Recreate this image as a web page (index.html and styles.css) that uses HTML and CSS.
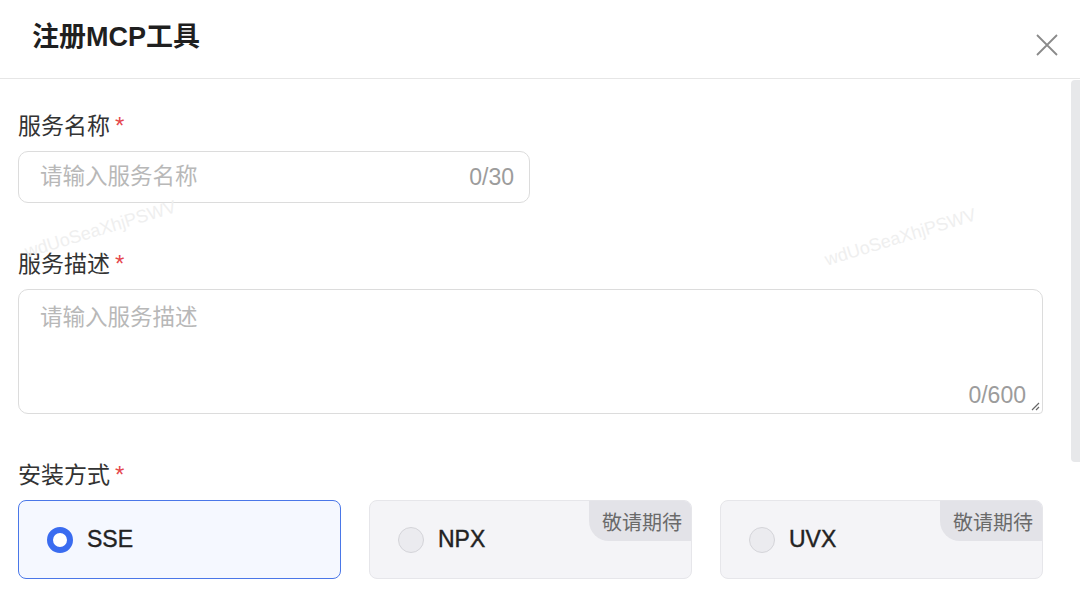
FILE: index.html
```html
<!DOCTYPE html>
<html lang="zh-CN">
<head>
<meta charset="utf-8">
<title>注册MCP工具</title>
<link rel="stylesheet" href="styles.css">
</head>
<body>
<div class="dialog">
  <div class="header">
    <h1 class="title">注册MCP工具</h1>
    <button class="close" aria-label="关闭">
      <svg width="22" height="22" viewBox="0 0 22 22"><path d="M1 1 L21 21 M21 1 L1 21" stroke="#8a8a8a" stroke-width="1.8" fill="none"/></svg>
    </button>
  </div>
  <div class="body">
    <div class="form-item item1">
      <div class="label">服务名称<span class="req">*</span></div>
      <div class="field field-input">
        <span class="placeholder">请输入服务名称</span>
        <span class="count">0/30</span>
      </div>
    </div>
    <div class="form-item item2">
      <div class="label">服务描述<span class="req">*</span></div>
      <div class="field field-area">
        <span class="placeholder">请输入服务描述</span>
        <span class="count count-area">0/600</span>
        <svg class="resize" width="10" height="10" viewBox="0 0 10 10"><path d="M9 2 L2 9 M9 6 L6 9" stroke="#666" stroke-width="1.2" fill="none"/></svg>
      </div>
    </div>
    <div class="form-item last">
      <div class="label">安装方式<span class="req">*</span></div>
      <div class="options">
        <div class="option active"><span class="radio on"></span><span class="opt-text">SSE</span></div>
        <div class="option"><span class="radio"></span><span class="opt-text">NPX</span><span class="badge">敬请期待</span></div>
        <div class="option"><span class="radio"></span><span class="opt-text">UVX</span><span class="badge">敬请期待</span></div>
      </div>
    </div>
    <div class="wm wm1">wdUoSeaXhjPSWV</div>
    <div class="wm wm2">wdUoSeaXhjPSWV</div>
  </div>
  <div class="scrollbar"></div>
</div>
</body>
</html>
```

FILE: styles.css
```css
* { box-sizing: border-box; }
html, body { margin: 0; padding: 0; background: #fff; }
body {
  font-family: "Liberation Sans", "Noto Sans CJK SC", sans-serif;
  color: #333;
  width: 1080px;
  height: 604px;
  overflow: hidden;
}
.dialog { position: relative; width: 1080px; height: 604px; }
.header {
  height: 79px;
  border-bottom: 1px solid #e6e6e6;
  display: flex;
  align-items: flex-start;
  justify-content: space-between;
  padding: 0 22px 0 32px;
}
.title {
  margin: 21px 0 0;
  font-size: 27px;
  line-height: 32px;
  font-weight: bold;
  color: #1f1f1f;
}
.close {
  margin-top: 34px;
  border: 0;
  background: none;
  padding: 0;
  width: 22px;
  height: 22px;
  cursor: pointer;
}
.body {
  position: relative;
  padding: 33px 37px 0 18px;
}
.item1 { margin-bottom: 47px; }
.item2 { margin-bottom: 47px; }
.label {
  height: 28px;
  font-size: 23px;
  line-height: 28px;
  color: #333;
  margin-bottom: 11px;
  display: flex;
  align-items: center;
}
.req { color: #e5484d; margin-left: 5px; font-size: 24px; line-height: 28px; }
.field {
  position: relative;
  border: 1.5px solid #dcdcdc;
  border-radius: 10px;
  background: #fff;
}
.field-input {
  width: 512px;
  height: 52px;
  display: flex;
  align-items: center;
  justify-content: space-between;
  padding: 0 15px 0 21px;
}
.placeholder { font-size: 22.5px; color: #b8b8b8; line-height: 24px; }
.count { font-size: 23px; color: #9c9c9c; line-height: 24px; }
.field-area {
  height: 125px;
  padding: 16px 21px;
  border-radius: 10px 10px 4px 10px;
}
.field-area .placeholder { display: block; }
.count-area { position: absolute; right: 16px; bottom: 6px; }
.resize { position: absolute; right: 2px; bottom: 2px; }
.options { display: flex; gap: 28px; }
.option {
  position: relative;
  width: 323px;
  height: 79px;
  border: 1.5px solid #e6e6ea;
  border-radius: 8px;
  background: #f4f4f7;
  display: flex;
  align-items: center;
  padding-left: 28px;
  overflow: hidden;
}
.option.active {
  border-color: #4a77e8;
  background: #f5f8ff;
}
.radio {
  width: 26px;
  height: 26px;
  border-radius: 50%;
  background: #ebebef;
  border: 1px solid #d4d4d9;
  flex: none;
}
.radio.on {
  background: #fff;
  border: 6.5px solid #3a6cf0;
}
.opt-text {
  margin-left: 14px;
  font-size: 23px;
  color: #222;
  -webkit-text-stroke: 0.4px #222;
}
.badge {
  position: absolute;
  top: 0;
  right: 0;
  width: 102px;
  height: 40px;
  background: #e3e3e8;
  border-bottom-left-radius: 20px;
  font-size: 20px;
  color: #6a6a6a;
  display: flex;
  align-items: center;
  justify-content: center;
  padding-left: 4px;
}
.wm {
  position: absolute;
  font-size: 18px;
  color: #efefef;
  transform: rotate(-17deg);
  pointer-events: none;
  white-space: nowrap;
}
.wm1 { left: 22px; top: 140px; }
.wm2 { left: 822px; top: 148px; }
.scrollbar {
  position: absolute;
  left: 1071px;
  top: 80px;
  width: 12px;
  height: 382px;
  background: #e7e8ea;
  border-radius: 4px;
}
```
